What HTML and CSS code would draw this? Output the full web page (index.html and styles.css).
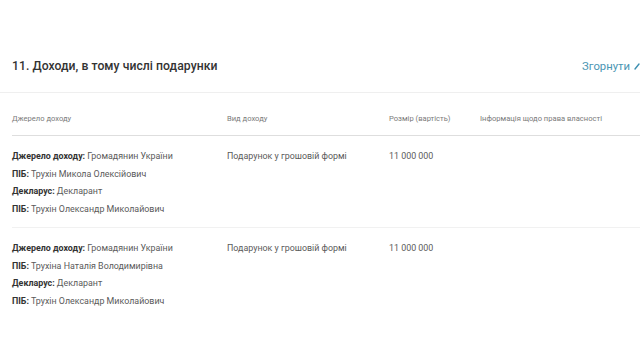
FILE: index.html
```html
<!DOCTYPE html>
<html lang="uk">
<head>
<meta charset="utf-8">
<link rel="stylesheet" href="styles.css">
</head>
<body>
<section class="section">
  <div class="section-head">
    <h2 class="title">11. Доходи, в тому числі подарунки</h2>
    <a class="toggle">Згорнути <svg class="chev" width="10" height="10" viewBox="0 0 10 10"><path d="M1 8 L5 3" stroke="#3d8fb0" stroke-width="1.4" fill="none" stroke-linecap="round"/></svg></a>
  </div>
  <div class="table">
    <div class="row head">
      <div>Джерело доходу</div>
      <div>Вид доходу</div>
      <div>Розмір (вартість)</div>
      <div>Інформація щодо права власності</div>
    </div>
    <div class="row item">
      <div class="info">
        <p><b>Джерело доходу:</b> Громадянин України</p>
        <p><b>ПІБ:</b> Трухін Микола Олексійович</p>
        <p><b>Декларус:</b> Декларант</p>
        <p><b>ПІБ:</b> Трухін Олександр Миколайович</p>
      </div>
      <div><p>Подарунок у грошовій формі</p></div>
      <div><p>11 000 000</p></div>
      <div></div>
    </div>
    <div class="row item last">
      <div class="info">
        <p><b>Джерело доходу:</b> Громадянин України</p>
        <p><b>ПІБ:</b> Трухіна Наталія Володимирівна</p>
        <p><b>Декларус:</b> Декларант</p>
        <p><b>ПІБ:</b> Трухін Олександр Миколайович</p>
      </div>
      <div><p>Подарунок у грошовій формі</p></div>
      <div><p>11 000 000</p></div>
      <div></div>
    </div>
  </div>
</section>
</body>
</html>
```

FILE: styles.css
```css
html, body {
  margin: 0;
  padding: 0;
  background: #fff;
  font-family: Roboto, "Noto Sans", sans-serif;
  overflow: hidden;
}
.section {
  width: 640px;
  padding-top: 54px;
}
.section-head {
  display: flex;
  justify-content: space-between;
  align-items: center;
  padding: 0 0 0 12px;
  height: 24px;
  border-bottom: 1px solid #efefef;
  padding-bottom: 14px;
}
.title {
  margin: 0;
  font-size: 12.2px;
  font-weight: 500;
  color: #333;
  letter-spacing: 0.05px;
}
.toggle {
  display: flex;
  align-items: center;
  gap: 4px;
  color: #4a95b3;
  font-size: 11.3px;
  margin-right: -4px;
}
.chev { display: block; }
.table {
  padding-left: 12px;
}
.row {
  display: grid;
  grid-template-columns: 215px 162px 91px 1fr;
}
.row.head {
  padding-top: 20px;
  padding-bottom: 10px;
  border-bottom: 1px solid #dedede;
  font-size: 7.6px;
  color: #7a7a7a;
  line-height: 12px;
}
.row.item {
  padding-top: 12px;
  padding-bottom: 9px;
  border-bottom: 1px solid #f1f1f1;
  font-size: 8.9px;
  color: #5a5a5a;
}
.row.item.last { border-bottom: none; }
.row p {
  margin: 0;
  line-height: 17.5px;
}
.row b {
  color: #333;
  font-weight: 700;
}
```
